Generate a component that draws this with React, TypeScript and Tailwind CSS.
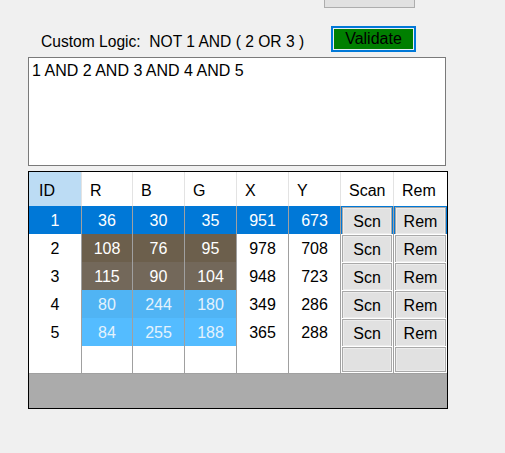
import React from 'react';

type Row = {
    id: number;
    r: number;
    b: number;
    g: number;
    x: number;
    y: number;
};

const rows: Row[] = [
    { id: 1, r: 36, b: 30, g: 35, x: 951, y: 673 },
    { id: 2, r: 108, b: 76, g: 95, x: 978, y: 708 },
    { id: 3, r: 115, b: 90, g: 104, x: 948, y: 723 },
    { id: 4, r: 80, b: 244, g: 180, x: 349, y: 286 },
    { id: 5, r: 84, b: 255, g: 188, x: 365, y: 288 },
];

const cols = 'grid grid-cols-[53px_51px_52px_52px_52px_52px_53px_53px]';
const headers = ['ID', 'R', 'B', 'G', 'X', 'Y', 'Scan', 'Rem'];

const GridButton = ({ label }: { label?: string }) => (
    <div className="flex h-full items-center justify-center p-[1px]">
        <div className="flex h-full w-full items-center justify-center border border-[#a9a9a9] bg-[#e1e1e1] pt-[2px] shadow-[inset_0_0_0_1px_#ececec]">
            {label}
        </div>
    </div>
);

const App: React.FC = () => {
    return (
        <div className="h-[453px] w-[505px] overflow-hidden bg-[#f0f0f0] font-['Liberation_Sans',Arial,sans-serif] text-black">
            <div className="ml-[324px] h-[8px] w-[91px] border-x border-b border-[#adadad] bg-[#e1e1e1]" />

            <div className="mt-[18px] flex h-[26px] items-center">
                <span className="ml-[41px] w-[290px] whitespace-pre pt-[6px] text-[15.6px]">Custom Logic:  NOT 1 AND ( 2 OR 3 )</span>
                <button type="button" className="h-[26px] w-[85px] border-2 border-[#0078d7] p-0">
                    <div className="flex h-full w-full items-center justify-center border border-[#e8eef5] bg-[#007f00] text-[16px]">
                        Validate
                    </div>
                </button>
            </div>

            <div className="ml-[28px] mt-[5px] h-[109px] w-[418px] border border-[#7a7a7a] bg-white px-[3px] pt-[1px] text-[16px]">
                1 AND 2 AND 3 AND 4 AND 5
            </div>

            <div className="ml-[28px] mt-[5px] flex h-[238px] w-[420px] flex-col border border-black bg-[#ababab] text-[16px]">
                <div className={`${cols} h-[34px] bg-white`}>
                    {headers.map((h, i) => (
                        <div
                            key={h}
                            className={`flex items-center pt-[3px] ${i === 0 ? 'bg-[#bcdcf4] pl-[10px]' : 'pl-[8px]'} ${i < 7 ? 'border-r border-[#e3e3e3]' : ''}`}
                        >
                            {h}
                        </div>
                    ))}
                </div>

                {rows.map((row) => {
                    const selected = row.id === 1;
                    const swatch = `rgb(${row.r}, ${row.g}, ${row.b})`;
                    const light = row.id >= 4;
                    const base = 'flex items-center justify-center border-r border-b border-[#a0a0a0]';
                    const plain = selected ? 'bg-[#0078d7] text-white' : 'bg-white';
                    const colorCell = selected
                        ? 'bg-[#0078d7] text-white'
                        : light
                          ? 'text-[#e4f2fc]'
                          : 'text-white';
                    return (
                        <div key={row.id} className={`${cols} h-[28px]`}>
                            <div className={`${base} ${plain}`}>{row.id}</div>
                            {[row.r, row.b, row.g].map((v, i) => (
                                <div
                                    key={i}
                                    className={`${base} ${colorCell}`}
                                    style={selected ? undefined : { backgroundColor: swatch }}
                                >
                                    {v}
                                </div>
                            ))}
                            <div className={`${base} ${plain}`}>{row.x}</div>
                            <div className={`${base} ${plain}`}>{row.y}</div>
                            <div className={`border-r border-b border-[#a0a0a0] ${selected ? 'bg-[#0078d7]' : 'bg-white'}`}>
                                <GridButton label="Scn" />
                            </div>
                            <div className={`border-b border-[#a0a0a0] ${selected ? 'bg-[#0078d7]' : 'bg-white'}`}>
                                <GridButton label="Rem" />
                            </div>
                        </div>
                    );
                })}

                <div className={`${cols} h-[28px]`}>
                    {[0, 1, 2, 3, 4, 5].map((i) => (
                        <div key={i} className="border-r border-b border-[#a0a0a0] bg-white" />
                    ))}
                    <div className="border-r border-b border-[#a0a0a0] bg-white">
                        <GridButton />
                    </div>
                    <div className="border-b border-[#a0a0a0] bg-white">
                        <GridButton />
                    </div>
                </div>
            </div>
        </div>
    );
};

export default App;
